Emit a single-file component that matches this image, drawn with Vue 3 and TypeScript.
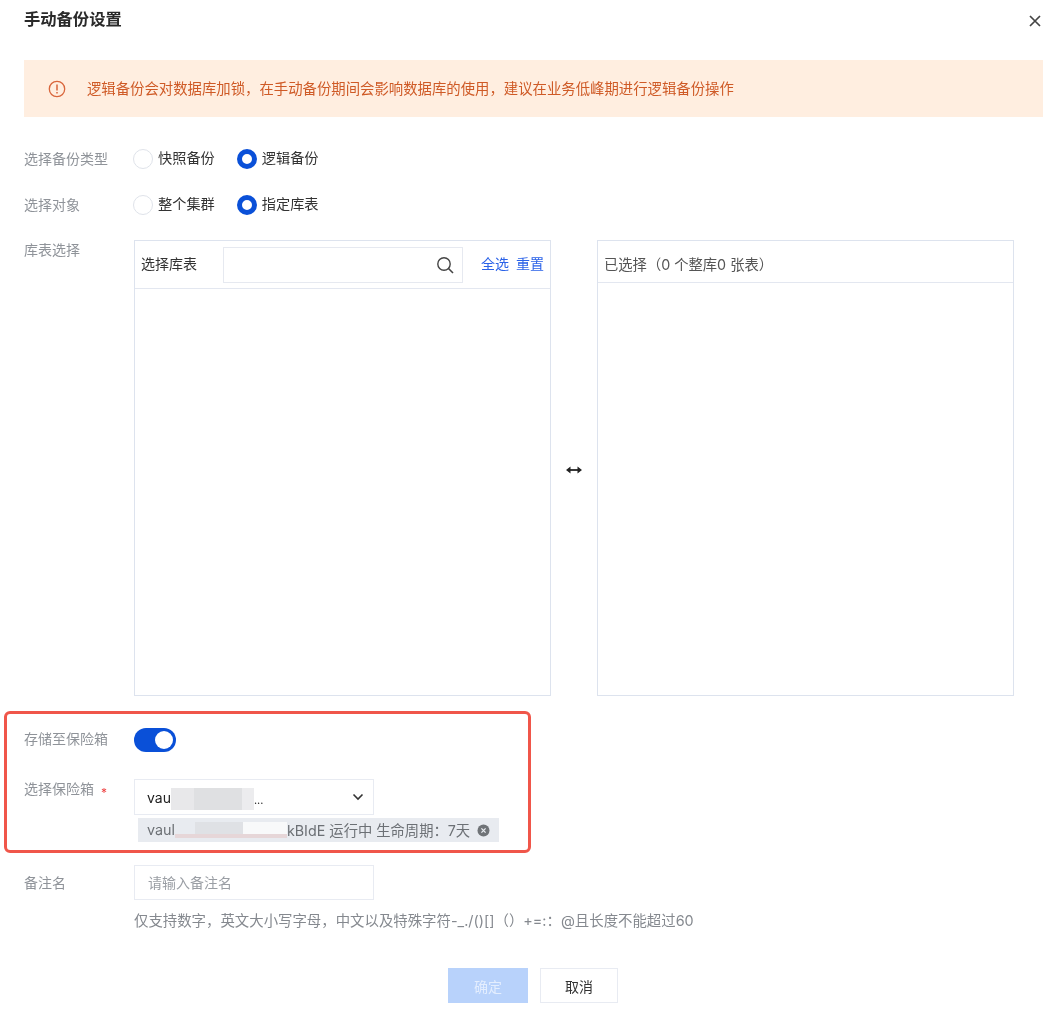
<script setup lang="ts">
const typeOptions = [
  { label: '快照备份', checked: false },
  { label: '逻辑备份', checked: true },
]
const targetOptions = [
  { label: '整个集群', checked: false },
  { label: '指定库表', checked: true },
]
</script>

<template>
  <div class="dialog">
    <header class="head">
      <h1 class="title">手动备份设置</h1>
      <svg class="close" width="12" height="12" viewBox="0 0 12 12" aria-label="关闭">
        <path d="M1 1L11 11M11 1L1 11" stroke="#444" stroke-width="1.7" fill="none" />
      </svg>
    </header>

    <div class="alert">
      <svg class="alert-icon" width="18" height="18" viewBox="0 0 18 18">
        <circle cx="9" cy="9" r="7.7" fill="none" stroke="#d9663c" stroke-width="1.3" />
        <path d="M9 4.6V10.4M9 12V13.4" stroke="#d9663c" stroke-width="1.5" fill="none" />
      </svg>
      <span class="alert-text">逻辑备份会对数据库加锁，在手动备份期间会影响数据库的使用，建议在业务低峰期进行逻辑备份操作</span>
    </div>

    <div class="row radio-row first">
      <label class="label">选择备份类型</label>
      <div class="radios">
        <div v-for="o in typeOptions" :key="o.label" class="radio">
          <i class="dot" :class="{ on: o.checked }"></i><span>{{ o.label }}</span>
        </div>
      </div>
    </div>
    <div class="row radio-row second">
      <label class="label">选择对象</label>
      <div class="radios">
        <div v-for="o in targetOptions" :key="o.label" class="radio">
          <i class="dot" :class="{ on: o.checked }"></i><span>{{ o.label }}</span>
        </div>
      </div>
    </div>

    <div class="row transfer-row">
      <label class="label top">库表选择</label>
      <div class="transfer">
        <section class="panel">
          <div class="panel-head left-head">
            <span class="panel-title">选择库表</span>
            <div class="search">
              <svg width="18" height="18" viewBox="0 0 18 18">
                <circle cx="8" cy="8" r="6.2" fill="none" stroke="#444" stroke-width="1.4" />
                <path d="M12.5 12.5L17 17" stroke="#444" stroke-width="1.6" fill="none" />
              </svg>
            </div>
            <a class="link first-link">全选</a>
            <a class="link">重置</a>
          </div>
        </section>
        <div class="swap">
          <svg width="16" height="8" viewBox="0 0 16 8">
            <path d="M3 4H13" stroke="#222" stroke-width="1.8" />
            <path d="M0 4L4.5 .4V7.6ZM16 4L11.5 .4V7.6Z" fill="#222" />
          </svg>
        </div>
        <section class="panel">
          <div class="panel-head right-head">已选择（0 个整库0 张表）</div>
        </section>
      </div>
    </div>

    <div class="row switch-row">
      <label class="label">存储至保险箱</label>
      <div class="switch"><i></i></div>
    </div>

    <div class="row vault-row">
      <label class="label top">选择保险箱<em>*</em></label>
      <div class="vault">
        <div class="select">
          <span class="select-text">vau<i class="mask-a"></i><b class="dots">...</b></span>
          <svg width="12" height="8" viewBox="0 0 12 8">
            <path d="M1.5 1.5L6 6L10.5 1.5" stroke="#333" stroke-width="1.6" fill="none" />
          </svg>
        </div>
        <div class="tag">
          <span>vaul<i class="mask-b"></i>kBIdE 运行中 生命周期：7天</span>
          <svg width="13" height="13" viewBox="0 0 13 13">
            <circle cx="6.5" cy="6.5" r="6" fill="#6f7377" />
            <path d="M4.4 4.4L8.6 8.6M8.6 4.4L4.4 8.6" stroke="#e8ebf0" stroke-width="1.3" />
          </svg>
        </div>
      </div>
    </div>

    <div class="row remark-row">
      <label class="label top">备注名</label>
      <div class="remark">
        <div class="input">请输入备注名</div>
        <p class="hint">仅支持数字，英文大小写字母，中文以及特殊字符-_./()[]（）+=:：@且长度不能超过60</p>
      </div>
    </div>

    <footer class="actions">
      <button class="btn primary">确定</button>
      <button class="btn">取消</button>
    </footer>

    <div class="highlight"></div>
  </div>
</template>

<style>
html, body { margin: 0; background: #fff; }
</style>

<style scoped>
.dialog {
  position: relative;
  box-sizing: border-box;
  width: 1062px;
  height: 1013px;
  padding: 0 19px 0 24px;
  overflow: hidden;
  background: #fff;
  color: #333;
  font-family: "Inter", "Noto Sans CJK SC", sans-serif;
  font-size: 14px;
  filter: blur(0.6px);
}
.head { display: flex; justify-content: space-between; align-items: flex-start; height: 60px; }
.title { margin: 9px 0 0; font-size: 16.3px; line-height: 20px; font-weight: 600; color: #2a2a2a; }
.close { margin: 15px 2px 0 0; }
.alert {
  display: flex; align-items: center; height: 57px; padding-left: 24px;
  background: #ffeee0; color: #cf5a26; font-size: 14.38px;
}
.alert-icon { margin-right: 21px; flex: none; }
.alert-text { position: relative; top: -1px; }
.row { display: flex; }
.label { width: 110px; flex: none; color: #8f9399; font-size: 14px; line-height: 20px; }
.label em { position: relative; top: 3px; margin-left: 7px; color: #ee4040; font-style: normal; font-size: 12px; }
.radio-row { align-items: center; height: 22px; }
.first { margin-top: 31px; }
.second { margin-top: 24px; }
.radios { display: flex; gap: 22px; margin: -1px 0 0 -1px; }
.radio { display: flex; align-items: center; gap: 5px; color: #333; font-size: 14.2px; line-height: 20px; }
.radio span { position: relative; top: -1px; }
.dot { box-sizing: border-box; width: 20px; height: 20px; border-radius: 50%; border: 1px solid #dfe3ea; background: #fff; }
.dot.on { border: 5.5px solid #0a50d8; }
.transfer-row { margin-top: 24px; }
.transfer { display: flex; }
.panel { box-sizing: border-box; width: 417px; height: 456px; border: 1px solid #dde3ee; }
.panel-head { box-sizing: border-box; border-bottom: 1px solid #e3e7f0; display: flex; align-items: center; }
.left-head { height: 48px; padding: 0 6px 4px; }
.panel-title { width: 82px; flex: none; color: #333; }
.search {
  box-sizing: border-box; width: 240px; height: 36px; margin-top: 4px; flex: none;
  border: 1px solid #e6e9f0; display: flex; align-items: center; justify-content: flex-end; padding-right: 8px;
}
.link { color: #2a62e8; font-size: 14px; margin-left: 7px; }
.first-link { margin-left: 18px; }
.right-head { height: 42px; padding: 3px 6px 0; color: #555; font-size: 14.3px; }
.swap { width: 46px; padding-top: 4px; display: flex; align-items: center; justify-content: center; }
.switch-row { margin-top: 32px; align-items: center; height: 24px; }
.switch-row .label { position: relative; top: -1px; }
.switch { box-sizing: border-box; width: 42px; height: 24px; border-radius: 12px; background: #0a50d8; padding: 3px 3px 3px 21px; }
.switch i { display: block; width: 18px; height: 18px; border-radius: 50%; background: #fff; }
.vault-row { margin-top: 27px; }
.vault { display: flex; flex-direction: column; align-items: flex-start; }
.select {
  box-sizing: border-box; width: 240px; height: 36px; padding: 0 9px 0 12px;
  border: 1px solid #e8ebf2; display: flex; align-items: center; justify-content: space-between;
}
.select-text { display: flex; align-items: center; color: #222; font-size: 14px; }
.mask-a {
  display: block; width: 83px; height: 22px; margin-top: 3px;
  background: linear-gradient(90deg, #e8e8ea 0 28%, #dfe0e2 28% 86%, #ececee 86%);
}
.dots { font-weight: 400; font-size: 11px; margin: 6px 0 0; }
.tag {
  box-sizing: border-box; width: 361px; height: 24px; margin: 3px 0 0 4px; padding: 0 9px;
  background: #e8ebf0; color: #6c7075; font-size: 14.3px;
  display: flex; align-items: center; justify-content: space-between; white-space: nowrap;
}
.tag span { display: flex; align-items: center; position: relative; top: -1px; }
.mask-b {
  display: block; width: 112px; height: 16px; margin-top: 2px;
  background:
    linear-gradient(180deg, transparent 0 75%, #e6d6d8 75%),
    linear-gradient(90deg, #e8ebf0 0 18%, #dfe1e5 18% 61%, #f8f9fa 61%);
}
.remark-row { margin-top: 23px; }
.remark-row .label { line-height: 35px; }
.input {
  box-sizing: border-box; width: 240px; height: 35px; padding-left: 13px;
  border: 1px solid #e8ebf2; line-height: 33px; color: #9a9ea4; font-size: 14px;
}
.hint { margin: 11px 0 0; color: #85898f; font-size: 14.42px; line-height: 20px; white-space: nowrap; }
.actions { position: absolute; left: 448px; top: 968px; display: flex; gap: 12px; }
.btn {
  box-sizing: border-box; width: 78px; height: 35px; padding: 0; border: 1px solid #e8ebf2; background: #fff;
  color: #333; font-family: inherit; font-size: 14px;
}
.btn.primary { width: 80px; border: none; background: #b8d2fb; color: #e4eefe; }
.highlight {
  position: absolute; left: 4px; top: 711px; width: 521px; height: 136px;
  border: 3px solid #f0564a; border-radius: 6px;
}
</style>
